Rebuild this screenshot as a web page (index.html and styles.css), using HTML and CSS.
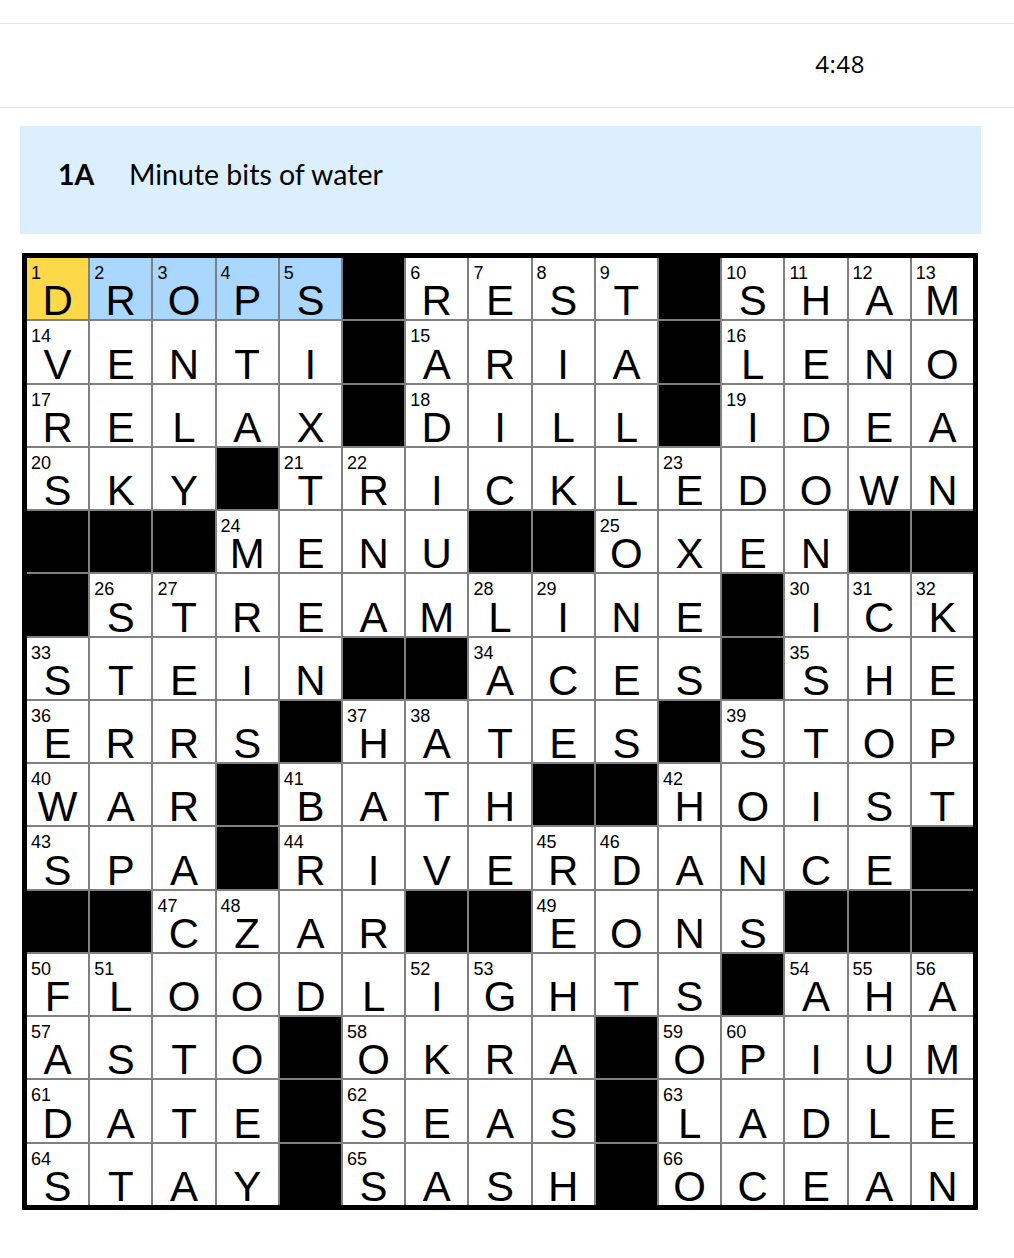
FILE: index.html
```html
<!DOCTYPE html>
<html lang="en">
<head>
<meta charset="utf-8">
<title>Crossword</title>
<link rel="stylesheet" href="styles.css">
</head>
<body>
<div class="top-gap"></div>
<header class="toolbar">
  <div class="timer">4:48</div>
</header>
<section class="clue-bar">
  <span class="clue-label">1A</span>
  <span class="clue-text">Minute bits of water</span>
</section>
<div class="board">
  <div class="cell selected"><span class="num">1</span><span class="letter">D</span></div>
  <div class="cell word"><span class="num">2</span><span class="letter">R</span></div>
  <div class="cell word"><span class="num">3</span><span class="letter">O</span></div>
  <div class="cell word"><span class="num">4</span><span class="letter">P</span></div>
  <div class="cell word"><span class="num">5</span><span class="letter">S</span></div>
  <div class="cell black"></div>
  <div class="cell"><span class="num">6</span><span class="letter">R</span></div>
  <div class="cell"><span class="num">7</span><span class="letter">E</span></div>
  <div class="cell"><span class="num">8</span><span class="letter">S</span></div>
  <div class="cell"><span class="num">9</span><span class="letter">T</span></div>
  <div class="cell black"></div>
  <div class="cell"><span class="num">10</span><span class="letter">S</span></div>
  <div class="cell"><span class="num">11</span><span class="letter">H</span></div>
  <div class="cell"><span class="num">12</span><span class="letter">A</span></div>
  <div class="cell"><span class="num">13</span><span class="letter">M</span></div>

  <div class="cell"><span class="num">14</span><span class="letter">V</span></div>
  <div class="cell"><span class="letter">E</span></div>
  <div class="cell"><span class="letter">N</span></div>
  <div class="cell"><span class="letter">T</span></div>
  <div class="cell"><span class="letter">I</span></div>
  <div class="cell black"></div>
  <div class="cell"><span class="num">15</span><span class="letter">A</span></div>
  <div class="cell"><span class="letter">R</span></div>
  <div class="cell"><span class="letter">I</span></div>
  <div class="cell"><span class="letter">A</span></div>
  <div class="cell black"></div>
  <div class="cell"><span class="num">16</span><span class="letter">L</span></div>
  <div class="cell"><span class="letter">E</span></div>
  <div class="cell"><span class="letter">N</span></div>
  <div class="cell"><span class="letter">O</span></div>

  <div class="cell"><span class="num">17</span><span class="letter">R</span></div>
  <div class="cell"><span class="letter">E</span></div>
  <div class="cell"><span class="letter">L</span></div>
  <div class="cell"><span class="letter">A</span></div>
  <div class="cell"><span class="letter">X</span></div>
  <div class="cell black"></div>
  <div class="cell"><span class="num">18</span><span class="letter">D</span></div>
  <div class="cell"><span class="letter">I</span></div>
  <div class="cell"><span class="letter">L</span></div>
  <div class="cell"><span class="letter">L</span></div>
  <div class="cell black"></div>
  <div class="cell"><span class="num">19</span><span class="letter">I</span></div>
  <div class="cell"><span class="letter">D</span></div>
  <div class="cell"><span class="letter">E</span></div>
  <div class="cell"><span class="letter">A</span></div>

  <div class="cell"><span class="num">20</span><span class="letter">S</span></div>
  <div class="cell"><span class="letter">K</span></div>
  <div class="cell"><span class="letter">Y</span></div>
  <div class="cell black"></div>
  <div class="cell"><span class="num">21</span><span class="letter">T</span></div>
  <div class="cell"><span class="num">22</span><span class="letter">R</span></div>
  <div class="cell"><span class="letter">I</span></div>
  <div class="cell"><span class="letter">C</span></div>
  <div class="cell"><span class="letter">K</span></div>
  <div class="cell"><span class="letter">L</span></div>
  <div class="cell"><span class="num">23</span><span class="letter">E</span></div>
  <div class="cell"><span class="letter">D</span></div>
  <div class="cell"><span class="letter">O</span></div>
  <div class="cell"><span class="letter">W</span></div>
  <div class="cell"><span class="letter">N</span></div>

  <div class="cell black"></div>
  <div class="cell black"></div>
  <div class="cell black"></div>
  <div class="cell"><span class="num">24</span><span class="letter">M</span></div>
  <div class="cell"><span class="letter">E</span></div>
  <div class="cell"><span class="letter">N</span></div>
  <div class="cell"><span class="letter">U</span></div>
  <div class="cell black"></div>
  <div class="cell black"></div>
  <div class="cell"><span class="num">25</span><span class="letter">O</span></div>
  <div class="cell"><span class="letter">X</span></div>
  <div class="cell"><span class="letter">E</span></div>
  <div class="cell"><span class="letter">N</span></div>
  <div class="cell black"></div>
  <div class="cell black"></div>

  <div class="cell black"></div>
  <div class="cell"><span class="num">26</span><span class="letter">S</span></div>
  <div class="cell"><span class="num">27</span><span class="letter">T</span></div>
  <div class="cell"><span class="letter">R</span></div>
  <div class="cell"><span class="letter">E</span></div>
  <div class="cell"><span class="letter">A</span></div>
  <div class="cell"><span class="letter">M</span></div>
  <div class="cell"><span class="num">28</span><span class="letter">L</span></div>
  <div class="cell"><span class="num">29</span><span class="letter">I</span></div>
  <div class="cell"><span class="letter">N</span></div>
  <div class="cell"><span class="letter">E</span></div>
  <div class="cell black"></div>
  <div class="cell"><span class="num">30</span><span class="letter">I</span></div>
  <div class="cell"><span class="num">31</span><span class="letter">C</span></div>
  <div class="cell"><span class="num">32</span><span class="letter">K</span></div>

  <div class="cell"><span class="num">33</span><span class="letter">S</span></div>
  <div class="cell"><span class="letter">T</span></div>
  <div class="cell"><span class="letter">E</span></div>
  <div class="cell"><span class="letter">I</span></div>
  <div class="cell"><span class="letter">N</span></div>
  <div class="cell black"></div>
  <div class="cell black"></div>
  <div class="cell"><span class="num">34</span><span class="letter">A</span></div>
  <div class="cell"><span class="letter">C</span></div>
  <div class="cell"><span class="letter">E</span></div>
  <div class="cell"><span class="letter">S</span></div>
  <div class="cell black"></div>
  <div class="cell"><span class="num">35</span><span class="letter">S</span></div>
  <div class="cell"><span class="letter">H</span></div>
  <div class="cell"><span class="letter">E</span></div>

  <div class="cell"><span class="num">36</span><span class="letter">E</span></div>
  <div class="cell"><span class="letter">R</span></div>
  <div class="cell"><span class="letter">R</span></div>
  <div class="cell"><span class="letter">S</span></div>
  <div class="cell black"></div>
  <div class="cell"><span class="num">37</span><span class="letter">H</span></div>
  <div class="cell"><span class="num">38</span><span class="letter">A</span></div>
  <div class="cell"><span class="letter">T</span></div>
  <div class="cell"><span class="letter">E</span></div>
  <div class="cell"><span class="letter">S</span></div>
  <div class="cell black"></div>
  <div class="cell"><span class="num">39</span><span class="letter">S</span></div>
  <div class="cell"><span class="letter">T</span></div>
  <div class="cell"><span class="letter">O</span></div>
  <div class="cell"><span class="letter">P</span></div>

  <div class="cell"><span class="num">40</span><span class="letter">W</span></div>
  <div class="cell"><span class="letter">A</span></div>
  <div class="cell"><span class="letter">R</span></div>
  <div class="cell black"></div>
  <div class="cell"><span class="num">41</span><span class="letter">B</span></div>
  <div class="cell"><span class="letter">A</span></div>
  <div class="cell"><span class="letter">T</span></div>
  <div class="cell"><span class="letter">H</span></div>
  <div class="cell black"></div>
  <div class="cell black"></div>
  <div class="cell"><span class="num">42</span><span class="letter">H</span></div>
  <div class="cell"><span class="letter">O</span></div>
  <div class="cell"><span class="letter">I</span></div>
  <div class="cell"><span class="letter">S</span></div>
  <div class="cell"><span class="letter">T</span></div>

  <div class="cell"><span class="num">43</span><span class="letter">S</span></div>
  <div class="cell"><span class="letter">P</span></div>
  <div class="cell"><span class="letter">A</span></div>
  <div class="cell black"></div>
  <div class="cell"><span class="num">44</span><span class="letter">R</span></div>
  <div class="cell"><span class="letter">I</span></div>
  <div class="cell"><span class="letter">V</span></div>
  <div class="cell"><span class="letter">E</span></div>
  <div class="cell"><span class="num">45</span><span class="letter">R</span></div>
  <div class="cell"><span class="num">46</span><span class="letter">D</span></div>
  <div class="cell"><span class="letter">A</span></div>
  <div class="cell"><span class="letter">N</span></div>
  <div class="cell"><span class="letter">C</span></div>
  <div class="cell"><span class="letter">E</span></div>
  <div class="cell black"></div>

  <div class="cell black"></div>
  <div class="cell black"></div>
  <div class="cell"><span class="num">47</span><span class="letter">C</span></div>
  <div class="cell"><span class="num">48</span><span class="letter">Z</span></div>
  <div class="cell"><span class="letter">A</span></div>
  <div class="cell"><span class="letter">R</span></div>
  <div class="cell black"></div>
  <div class="cell black"></div>
  <div class="cell"><span class="num">49</span><span class="letter">E</span></div>
  <div class="cell"><span class="letter">O</span></div>
  <div class="cell"><span class="letter">N</span></div>
  <div class="cell"><span class="letter">S</span></div>
  <div class="cell black"></div>
  <div class="cell black"></div>
  <div class="cell black"></div>

  <div class="cell"><span class="num">50</span><span class="letter">F</span></div>
  <div class="cell"><span class="num">51</span><span class="letter">L</span></div>
  <div class="cell"><span class="letter">O</span></div>
  <div class="cell"><span class="letter">O</span></div>
  <div class="cell"><span class="letter">D</span></div>
  <div class="cell"><span class="letter">L</span></div>
  <div class="cell"><span class="num">52</span><span class="letter">I</span></div>
  <div class="cell"><span class="num">53</span><span class="letter">G</span></div>
  <div class="cell"><span class="letter">H</span></div>
  <div class="cell"><span class="letter">T</span></div>
  <div class="cell"><span class="letter">S</span></div>
  <div class="cell black"></div>
  <div class="cell"><span class="num">54</span><span class="letter">A</span></div>
  <div class="cell"><span class="num">55</span><span class="letter">H</span></div>
  <div class="cell"><span class="num">56</span><span class="letter">A</span></div>

  <div class="cell"><span class="num">57</span><span class="letter">A</span></div>
  <div class="cell"><span class="letter">S</span></div>
  <div class="cell"><span class="letter">T</span></div>
  <div class="cell"><span class="letter">O</span></div>
  <div class="cell black"></div>
  <div class="cell"><span class="num">58</span><span class="letter">O</span></div>
  <div class="cell"><span class="letter">K</span></div>
  <div class="cell"><span class="letter">R</span></div>
  <div class="cell"><span class="letter">A</span></div>
  <div class="cell black"></div>
  <div class="cell"><span class="num">59</span><span class="letter">O</span></div>
  <div class="cell"><span class="num">60</span><span class="letter">P</span></div>
  <div class="cell"><span class="letter">I</span></div>
  <div class="cell"><span class="letter">U</span></div>
  <div class="cell"><span class="letter">M</span></div>

  <div class="cell"><span class="num">61</span><span class="letter">D</span></div>
  <div class="cell"><span class="letter">A</span></div>
  <div class="cell"><span class="letter">T</span></div>
  <div class="cell"><span class="letter">E</span></div>
  <div class="cell black"></div>
  <div class="cell"><span class="num">62</span><span class="letter">S</span></div>
  <div class="cell"><span class="letter">E</span></div>
  <div class="cell"><span class="letter">A</span></div>
  <div class="cell"><span class="letter">S</span></div>
  <div class="cell black"></div>
  <div class="cell"><span class="num">63</span><span class="letter">L</span></div>
  <div class="cell"><span class="letter">A</span></div>
  <div class="cell"><span class="letter">D</span></div>
  <div class="cell"><span class="letter">L</span></div>
  <div class="cell"><span class="letter">E</span></div>

  <div class="cell"><span class="num">64</span><span class="letter">S</span></div>
  <div class="cell"><span class="letter">T</span></div>
  <div class="cell"><span class="letter">A</span></div>
  <div class="cell"><span class="letter">Y</span></div>
  <div class="cell black"></div>
  <div class="cell"><span class="num">65</span><span class="letter">S</span></div>
  <div class="cell"><span class="letter">A</span></div>
  <div class="cell"><span class="letter">S</span></div>
  <div class="cell"><span class="letter">H</span></div>
  <div class="cell black"></div>
  <div class="cell"><span class="num">66</span><span class="letter">O</span></div>
  <div class="cell"><span class="letter">C</span></div>
  <div class="cell"><span class="letter">E</span></div>
  <div class="cell"><span class="letter">A</span></div>
  <div class="cell"><span class="letter">N</span></div>
</div>
</body>
</html>
```

FILE: styles.css
```css
* { box-sizing: border-box; }

html, body {
  margin: 0;
  padding: 0;
  background: #ffffff;
  color: #000000;
  font-family: "Liberation Sans", Arial, sans-serif;
}

.top-gap {
  height: 23px;
}

.toolbar {
  height: 85px;
  border-top: 1px solid #e6e6e6;
  border-bottom: 1px solid #e6e6e6;
  display: flex;
  align-items: center;
  justify-content: flex-end;
  padding-right: 149px;
}

.timer {
  font-family: "Open Sans", "Noto Sans", sans-serif;
  font-size: 24px;
  letter-spacing: 0.6px;
  line-height: 1;
  padding-bottom: 3px;
}

.clue-bar {
  margin: 18px 0 0 20px;
  width: 961px;
  height: 108px;
  background: #dcefff;
  display: flex;
  align-items: center;
  padding: 0 0 12px 38px;
  font-family: Lato, "Liberation Sans", sans-serif;
  font-size: 28.5px;
  line-height: 1;
}

.clue-label {
  font-weight: 700;
  width: 71px;
  flex: none;
}

.clue-text {
  font-weight: 400;
}

.board {
  margin: 19px 0 0 22px;
  width: 956px;
  height: 957px;
  border: 5px solid #000000;
  background: #808080;
  display: grid;
  grid-template-columns: repeat(15, 1fr);
  grid-template-rows: repeat(15, 1fr);
  gap: 2px;
}

.cell {
  position: relative;
  background: #ffffff;
  display: flex;
  align-items: flex-end;
  justify-content: center;
  min-width: 0;
  min-height: 0;
}

.cell.black { background: #000000; }
.cell.selected { background: #fdd949; }
.cell.word { background: #a9d7fd; }

.num {
  position: absolute;
  top: 7px;
  left: 4px;
  font-size: 18px;
  line-height: 16px;
}

.letter {
  font-size: 42px;
  line-height: 36px;
}
```
